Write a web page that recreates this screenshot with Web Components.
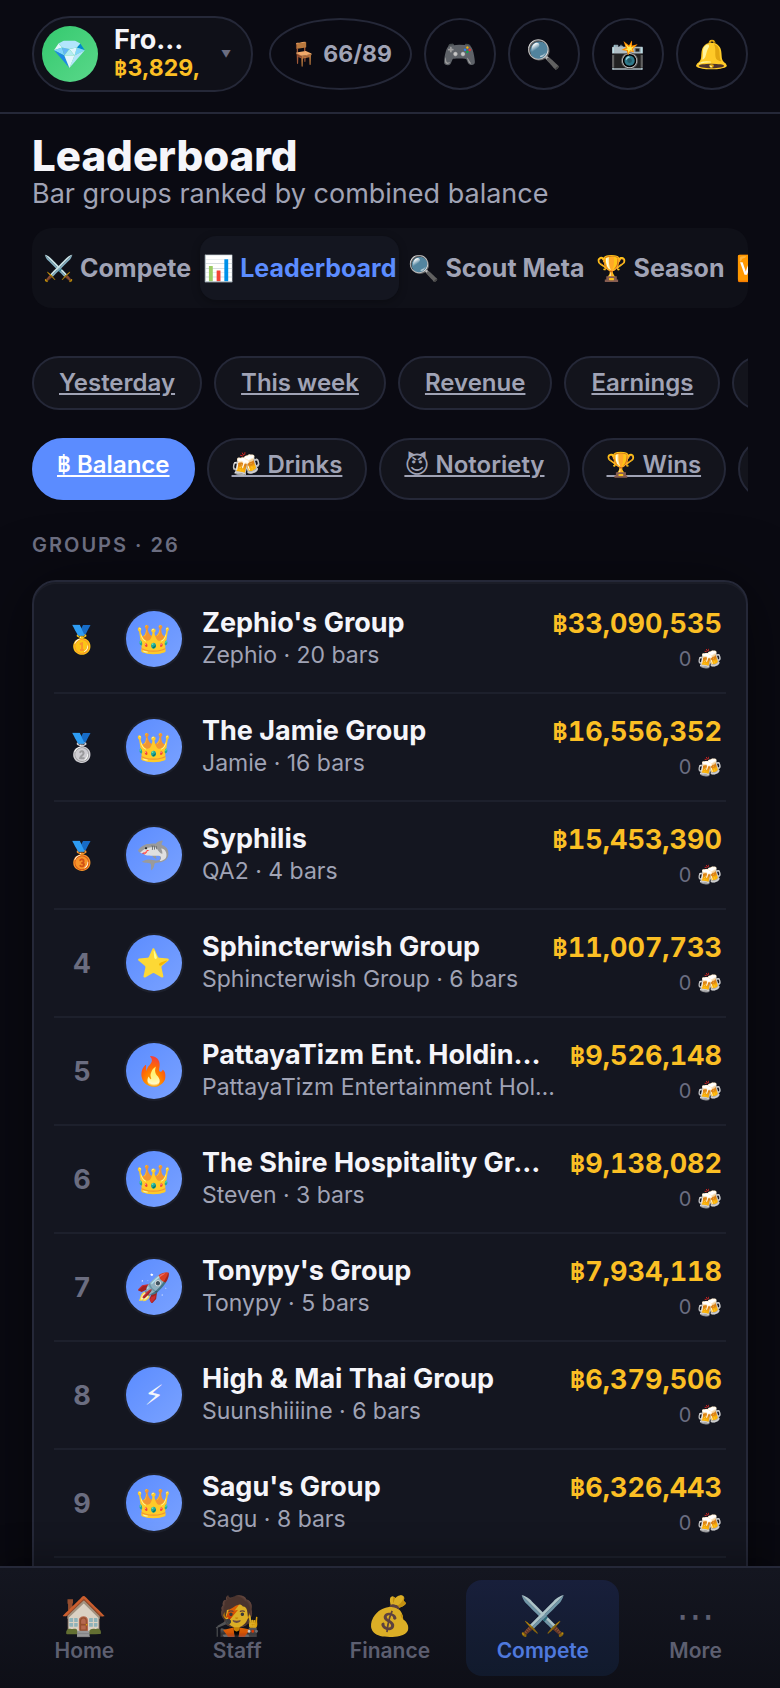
<!DOCTYPE html>
<html lang="en">
<head>
<meta charset="utf-8">
<meta name="viewport" content="width=device-width, initial-scale=1">
<title>Leaderboard</title>
<style>
    :root {
        --bg: #0a0a12;
        --surface: #141620;
        --soft: #0f1018;
        --chip: #13141c;
        --line: #252838;
        --line-soft: #1d202c;
        --text: #f5f5fa;
        --dim: #a0a3b5;
        --muted: #6b6d80;
        --blue: #5b8cff;
        --gold: #fbbf24;
        --baht: "Noto Sans Thai", "Noto Sans", sans-serif;
    }
    body {
        margin: 0;
        background: var(--bg);
        color: var(--text);
        font-family: Inter, "Noto Color Emoji", "DejaVu Sans", sans-serif;
    }
</style>
</head>
<body>
<bar-app></bar-app>

<script>
// builds a template from a string of styles and markup.
function makeTemplate(html) {
    const temp = document.createElement('template');
    temp.innerHTML = `
<style>
    * {
        box-sizing: border-box;
    }
    :host {
        box-sizing: border-box;
    }
    h1, h2, p {
        margin: 0;
    }
    button {
        padding: 0;
        font: inherit;
        color: inherit;
        background: none;
        border: 0;
        cursor: pointer;
    }
    a {
        color: inherit;
        text-decoration: none;
    }
    .baht {
        font-family: var(--baht);
        line-height: 0;
    }
</style>
${html}`;
    return temp;
}

class BaseElement extends HTMLElement {
    constructor() {
        super();
        this.attachShadow({ mode: 'open' });
        this.shadowRoot.appendChild(this.constructor.temp.content.cloneNode(true));
    }
}

// top bar: player pill, seats and the round tool buttons.
class TopBar extends BaseElement {
    static temp = makeTemplate(`
<style>
    :host {
        display: block;
        border-bottom: 2px solid var(--line);
    }
    header {
        display: flex;
        align-items: center;
        gap: 12px;
        padding: 16px 32px 20px;
    }
    button {
        border: 2px solid var(--line);
        flex: none;
    }
    .player {
        display: flex;
        align-items: center;
        gap: 16px;
        flex: 1 1 0;
        min-width: 0;
        margin-right: 4px;
        padding: 8px 20px 8px 8px;
        border-radius: 38px;
        background: var(--soft);
        text-align: left;
    }
    .avatar {
        display: grid;
        place-items: center;
        flex: none;
        width: 56px;
        height: 56px;
        border-radius: 50%;
        background: linear-gradient(135deg, #34c96e, #5ad88a);
        font-size: 28px;
    }
    .who {
        flex: 1;
        min-width: 0;
    }
    .name, .money {
        display: block;
        white-space: nowrap;
        font-weight: 700;
        line-height: 28px;
    }
    .name {
        font-size: 27px;
    }
    .money {
        color: var(--gold);
        font-size: 23px;
    }
    .caret {
        color: var(--muted);
        font-size: 10px;
    }
    .seats {
        height: 72px;
        padding: 0 18px;
        border-radius: 50%;
        color: var(--dim);
        font-size: 23px;
        font-weight: 700;
    }
    .tool {
        width: 72px;
        height: 72px;
        border-radius: 50%;
        font-size: 28px;
    }
</style>
<header>
    <button class="player" aria-label="Switch bar">
        <span class="avatar">💎</span>
        <span class="who"><span class="name">Fro…</span><span class="money"><span class="baht">฿</span>3,829,</span></span>
        <span class="caret">▼</span>
    </button>
    <button class="seats">🪑 66/89</button>
    <button class="tool" aria-label="Games">🎮</button>
    <button class="tool" aria-label="Search">🔍</button>
    <button class="tool" aria-label="Photo">📸</button>
    <button class="tool" aria-label="Alerts">🔔</button>
</header>
`);
}
customElements.define('top-bar', TopBar);

class PageTitle extends BaseElement {
    static temp = makeTemplate(`
<style>
    :host { display: block; }
    h1 {
        font-size: 42px;
        font-weight: 800;
        line-height: 44px;
    }
    p {
        color: var(--dim);
        font-size: 27px;
        line-height: 32px;
    }
</style>
<h1><slot></slot></h1>
<p><slot name="sub"></slot></p>
`);
}
customElements.define('page-title', PageTitle);

class TabBar extends BaseElement {
    static temp = makeTemplate(`
<style>
    :host { display: block; }
    nav {
        display: flex;
        gap: 6px;
        padding: 8px;
        overflow: hidden;
        border-radius: 20px;
        background: var(--soft);
    }
</style>
<nav aria-label="Compete sections"><slot></slot></nav>
`);
}
customElements.define('tab-bar', TabBar);

class TabItem extends BaseElement {
    static temp = makeTemplate(`
<style>
    :host { display: block; flex: none; }
    button {
        height: 64px;
        padding: 0 3px;
        border-radius: 16px;
        color: var(--dim);
        font-size: 25px;
        font-weight: 700;
        white-space: nowrap;
    }
    :host([active]) button {
        background: var(--surface);
        box-shadow: 0 2px 8px rgba(0, 0, 0, 0.3);
        color: var(--blue);
    }
</style>
<button><slot></slot></button>
`);
}
customElements.define('tab-item', TabItem);

// row of chips that runs past the right edge.
class ChipRow extends BaseElement {
    static temp = makeTemplate(`
<style>
    :host {
        display: flex;
        gap: 12px;
        overflow: hidden;
    }
</style>
<slot></slot>
`);
}
customElements.define('chip-row', ChipRow);

class ChipLink extends BaseElement {
    static temp = makeTemplate(`
<style>
    :host { display: flex; flex: none; }
    a {
        min-width: 128px;
        padding: 10px 25px;
        border: 2px solid var(--line);
        border-radius: 32px;
        background: var(--chip);
        color: var(--dim);
        font-size: 24px;
        font-weight: 600;
        line-height: 30px;
        text-decoration: underline;
        white-space: nowrap;
    }
    :host([tall]) a { padding: 10px 23px 18px; }
    :host([active]) a {
        background: var(--blue);
        border-color: var(--blue);
        color: #fff;
    }
</style>
<a href="#"><slot></slot></a>
`);
}
customElements.define('chip-link', ChipLink);

class GroupRow extends BaseElement {
    static temp = makeTemplate(`
<style>
    :host {
        display: flex;
        align-items: center;
        gap: 20px;
        padding: 18px 4px;
        border-bottom: 2px solid var(--line-soft);
    }
    .rank {
        flex: none;
        width: 48px;
        color: var(--muted);
        font-size: 27px;
        font-weight: 700;
        text-align: center;
    }
    .avatar {
        display: grid;
        place-items: center;
        flex: none;
        width: 56px;
        height: 56px;
        border-radius: 50%;
        background: linear-gradient(135deg, #5b8cff, #7aa2ff);
        box-shadow: 0 0 0 2px var(--line-soft);
        font-size: 28px;
    }
    .info {
        flex: 1;
        min-width: 0;
    }
    .info > * {
        white-space: nowrap;
    }
    h2 {
        font-size: 27px;
        font-weight: 700;
        line-height: 32px;
    }
    .owner {
        color: var(--dim);
        font-size: 23px;
        line-height: 32px;
    }
    .score {
        padding-top: 4px;
        text-align: right;
    }
    .total {
        color: var(--gold);
        font-size: 27px;
        font-weight: 700;
        font-variant-numeric: tabular-nums;
        line-height: 32px;
    }
    .drinks {
        margin-top: 4px;
        color: var(--muted);
        font-size: 20px;
        line-height: 30px;
    }
</style>
<div class="rank"></div>
<div class="avatar"></div>
<div class="info"><h2></h2><p class="owner"></p></div>
<div class="score"><p class="total"><span class="baht">฿</span><span class="sum"></span></p><p class="drinks"></p></div>
`);

    connectedCallback() {
        const root = this.shadowRoot;
        const fill = (sel, value) => root.querySelector(sel).textContent = value;
        fill('.rank', this.getAttribute('rank'));
        fill('.avatar', this.getAttribute('icon'));
        fill('h2', this.getAttribute('name'));
        fill('.owner', this.getAttribute('owner'));
        fill('.sum', this.getAttribute('total'));
        fill('.drinks', '0 🍻');
    }
}
customElements.define('group-row', GroupRow);

const groups = [
    ['🥇', '👑', "Zephio's Group", 'Zephio · 20 bars', '33,090,535'],
    ['🥈', '👑', 'The Jamie Group', 'Jamie · 16 bars', '16,556,352'],
    ['🥉', '🦈', 'Syphilis', 'QA2 · 4 bars', '15,453,390'],
    ['4', '⭐', 'Sphincterwish Group', 'Sphincterwish Group · 6 bars', '11,007,733'],
    ['5', '🔥', 'PattayaTizm Ent. Holdin…', 'PattayaTizm Entertainment Hol…', '9,526,148'],
    ['6', '👑', 'The Shire Hospitality Gr…', 'Steven · 3 bars', '9,138,082'],
    ['7', '🚀', "Tonypy's Group", 'Tonypy · 5 bars', '7,934,118'],
    ['8', '⚡\uFE0E', 'High & Mai Thai Group', 'Suunshiiiine · 6 bars', '6,379,506'],
    ['9', '👑', "Sagu's Group", 'Sagu · 8 bars', '6,326,443'],
];

class GroupList extends BaseElement {
    static temp = makeTemplate(`
<style>
    :host {
        display: block;
        padding: 4px 20px 64px;
        border: 2px solid var(--line);
        border-radius: 24px;
        background: var(--surface);
        box-shadow: 0 8px 64px rgba(0, 0, 0, 0.5), inset 0 2px 0 rgba(255, 255, 255, 0.03);
    }
</style>
`);

    connectedCallback() {
        groups.forEach(([rank, icon, name, owner, total]) => {
            const row = document.createElement('group-row');
            row.setAttribute('rank', rank);
            row.setAttribute('icon', icon);
            row.setAttribute('name', name);
            row.setAttribute('owner', owner);
            row.setAttribute('total', total);
            this.shadowRoot.appendChild(row);
        });
    }
}
customElements.define('group-list', GroupList);

class BottomNav extends BaseElement {
    static temp = makeTemplate(`
<style>
    :host {
        display: block;
        position: relative;
        border-top: 2px solid var(--line);
        background: linear-gradient(#141620, #0e0f17);
        box-shadow: 0 -8px 32px rgba(0, 0, 0, 0.3);
    }
    nav {
        display: flex;
        padding: 12px 8px;
    }
</style>
<nav aria-label="Main"><slot></slot></nav>
`);
}
customElements.define('bottom-nav', BottomNav);

class NavItem extends BaseElement {
    static temp = makeTemplate(`
<style>
    :host { display: block; flex: 1 1 0; }
    a {
        display: flex;
        flex-direction: column;
        align-items: center;
        height: 96px;
        padding-top: 11px;
        border-radius: 16px;
        color: var(--muted);
        font-size: 21px;
        font-weight: 600;
        line-height: 24px;
        opacity: 0.85;
    }
    .icon {
        font-size: 38px;
        font-weight: 400;
        line-height: 48px;
    }
    :host([active]) a {
        background: linear-gradient(#192140, #121c30);
        color: var(--blue);
    }
</style>
<a href="#"><span class="icon"><slot name="icon"></slot></span><slot></slot></a>
`);
}
customElements.define('nav-item', NavItem);

// whole screen: fixed bars with the scrolling page between them.
class BarApp extends BaseElement {
    static temp = makeTemplate(`
<style>
    :host {
        display: flex;
        flex-direction: column;
        height: 100vh;
    }
    main {
        flex: 1;
        min-height: 0;
        overflow: auto;
        scrollbar-width: none;
        padding: 20px 32px 0;
    }
    tab-bar { margin: 18px 0 48px; }
    chip-row + chip-row { margin-top: 28px; }
    .count {
        margin: 32px 0 22px;
        color: var(--muted);
        font-size: 20px;
        font-weight: 600;
        line-height: 26px;
        letter-spacing: 2px;
    }
</style>
<top-bar></top-bar>
<main>
    <page-title>Leaderboard<span slot="sub">Bar groups ranked by combined balance</span></page-title>
    <tab-bar>
        <tab-item>⚔️ Compete</tab-item>
        <tab-item active>📊 Leaderboard</tab-item>
        <tab-item>🔍 Scout Meta</tab-item>
        <tab-item>🏆 Season</tab-item>
        <tab-item>🆚</tab-item>
    </tab-bar>
    <chip-row>
        <chip-link>Yesterday</chip-link>
        <chip-link>This week</chip-link>
        <chip-link>Revenue</chip-link>
        <chip-link>Earnings</chip-link>
        <chip-link></chip-link>
    </chip-row>
    <chip-row>
        <chip-link tall active><span class="baht">฿</span> Balance</chip-link>
        <chip-link tall>🍻 Drinks</chip-link>
        <chip-link tall>😈&#xFE0E; Notoriety</chip-link>
        <chip-link tall>🏆 Wins</chip-link>
        <chip-link tall></chip-link>
    </chip-row>
    <p class="count">GROUPS · 26</p>
    <group-list></group-list>
</main>
<bottom-nav>
    <nav-item><span slot="icon">🏠</span>Home</nav-item>
    <nav-item><span slot="icon">🧑‍🎤</span>Staff</nav-item>
    <nav-item><span slot="icon">💰</span>Finance</nav-item>
    <nav-item active><span slot="icon">⚔️</span>Compete</nav-item>
    <nav-item><span slot="icon">⋯</span>More</nav-item>
</bottom-nav>
`);
}
customElements.define('bar-app', BarApp);
</script>
</body>
</html>
